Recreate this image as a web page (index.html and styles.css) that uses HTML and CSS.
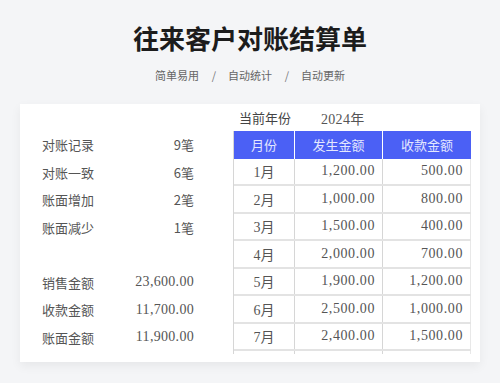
FILE: index.html
```html
<!DOCTYPE html>
<html lang="zh">
<head>
<meta charset="utf-8">
<link rel="stylesheet" href="styles.css">
</head>
<body>
<header class="top">
  <h1 class="title">往来客户对账结算单</h1>
  <p class="tags"><span>简单易用</span><span class="sep">/</span><span>自动统计</span><span class="sep">/</span><span>自动更新</span></p>
</header>
<main class="card">
  <section class="summary">
    <div class="srow"><span>对账记录</span><span>9笔</span></div>
    <div class="srow"><span>对账一致</span><span>6笔</span></div>
    <div class="srow"><span>账面增加</span><span>2笔</span></div>
    <div class="srow"><span>账面减少</span><span>1笔</span></div>
    <div class="srow"></div>
    <div class="srow"><span>销售金额</span><span class="num">23,600.00</span></div>
    <div class="srow"><span>收款金额</span><span class="num">11,700.00</span></div>
    <div class="srow"><span>账面金额</span><span class="num">11,900.00</span></div>
  </section>
  <section class="sheet">
    <div class="year"><span class="ylabel">当前年份</span><span class="num">2024年</span></div>
    <div class="grid-wrap">
      <div class="row head"><div class="c">月份</div><div class="c">发生金额</div><div class="c">收款金额</div></div>
      <div class="row"><div class="c m">1月</div><div class="c n">1,200.00</div><div class="c n">500.00</div></div>
      <div class="row"><div class="c m">2月</div><div class="c n">1,000.00</div><div class="c n">800.00</div></div>
      <div class="row"><div class="c m">3月</div><div class="c n">1,500.00</div><div class="c n">400.00</div></div>
      <div class="row"><div class="c m">4月</div><div class="c n">2,000.00</div><div class="c n">700.00</div></div>
      <div class="row"><div class="c m">5月</div><div class="c n">1,900.00</div><div class="c n">1,200.00</div></div>
      <div class="row"><div class="c m">6月</div><div class="c n">2,500.00</div><div class="c n">1,000.00</div></div>
      <div class="row"><div class="c m">7月</div><div class="c n">2,400.00</div><div class="c n">1,500.00</div></div>
      <div class="row"><div class="c m"></div><div class="c n"></div><div class="c n"></div></div>
    </div>
  </section>
</main>
</body>
</html>
```

FILE: styles.css
```css
* { box-sizing: border-box; }
html, body { margin: 0; padding: 0; }
body {
  width: 500px;
  height: 383px;
  overflow: hidden;
  background: #f4f5f7;
  font-family: "Liberation Serif", "Noto Sans CJK SC", serif;
  color: #555;
}
.top {
  height: 104px;
  text-align: center;
  padding-top: 21px;
}
.title {
  margin: 0;
  font-family: "Noto Sans CJK SC", sans-serif;
  font-weight: 700;
  font-size: 26px;
  line-height: 34px;
  color: #1c1c1c;
}
.tags {
  margin: 12px 0 0;
  font-family: "Noto Sans CJK SC", sans-serif;
  font-size: 11px;
  line-height: 16px;
  color: #666;
  display: flex;
  justify-content: center;
}
.tags .sep {
  width: 28px;
  color: #777;
  margin-left: 1px;
}
.card {
  margin: 0 20px;
  width: 460px;
  height: 258px;
  background: #fff;
  box-shadow: 0 4px 10px rgba(0,0,0,0.06);
  display: flex;
  padding: 0 9px 0 22px;
}
.summary {
  width: 152px;
  padding-top: 27px;
  margin-right: 39px;
}
.srow {
  height: 27.5px;
  display: flex;
  justify-content: space-between;
  align-items: center;
  font-family: "Noto Sans CJK SC", sans-serif;
  font-size: 13px;
  color: #555;
}
.num {
  font-family: "Liberation Serif", "Noto Sans CJK SC", serif;
  font-size: 14px;
  color: #555;
  letter-spacing: 0.3px;
}
.sheet {
  width: 238px;
}
.year {
  height: 27px;
  display: flex;
  align-items: center;
  padding-left: 6px;
  font-family: "Noto Sans CJK SC", sans-serif;
  font-size: 13px;
  color: #444;
}
.ylabel { width: 82px; }
.grid-wrap {
  height: 223px;
  overflow: hidden;
  border-left: 1px solid #d6d6d6;
}
.row {
  display: grid;
  grid-template-columns: 61px 88px 88px;
  height: 27.5px;
  border-bottom: 2px solid #e3e3e3;
}
.row.head {
  background: #4b60f5;
  color: #fff;
  border-bottom: none;
}
.c {
  display: flex;
  align-items: center;
  padding: 0 7px;
  font-size: 13px;
  border-right: 1px solid #d6d6d6;
}
.head .c {
  justify-content: center;
  border-right: 1.5px solid #fff;
  font-family: "Noto Sans CJK SC", sans-serif;
  color: #e3e7ff;
}
.head .c:last-child { border-right: none; }
.c.m {
  justify-content: center;
  font-family: "Liberation Serif", "Noto Sans CJK SC", serif;
  font-size: 14px;
}
.c.n {
  justify-content: flex-end;
  font-family: "Liberation Serif", serif;
  font-size: 14px;
  letter-spacing: 0.6px;
}
.c.n:last-child { border-right: 1px solid #e8e8e8; }
```
